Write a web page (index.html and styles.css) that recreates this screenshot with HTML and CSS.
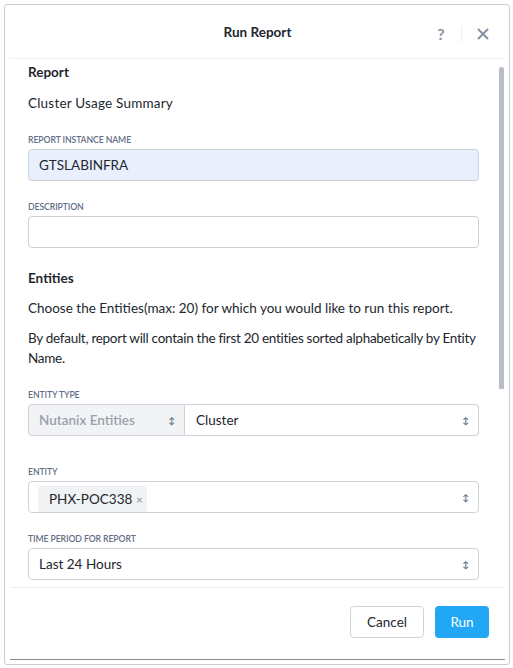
FILE: index.html
```html
<!DOCTYPE html>
<html>
<head>
<meta charset="utf-8">
<link rel="stylesheet" href="styles.css">
</head>
<body>
<div class="dialog">
  <div class="header">
    <div class="title">Run Report</div>
    <div class="actions">
      <span class="help">?</span>
      <span class="sep"></span>
      <svg class="close" width="12" height="12" viewBox="0 0 12 12"><path d="M1.5 1.5 L10.5 10.5 M10.5 1.5 L1.5 10.5" stroke="#8592a3" stroke-width="2" stroke-linecap="round"/></svg>
    </div>
  </div>
  <div class="body">
    <div class="content">
      <div class="section-title first">Report</div>
      <div class="value">Cluster Usage Summary</div>
      <div class="label l1">REPORT INSTANCE NAME</div>
      <div class="input filled">GTSLABINFRA</div>
      <div class="label l2">DESCRIPTION</div>
      <div class="input"></div>
      <div class="section-title ent">Entities</div>
      <p class="para p1">Choose the Entities(max: 20) for which you would like to run this report.</p>
      <p class="para p2">By default, report will contain the first 20 entities sorted alphabetically by Entity Name.</p>
      <div class="label l3">ENTITY TYPE</div>
      <div class="split">
        <div class="sel-left"><span>Nutanix Entities</span><span class="arrows">&#8597;</span></div>
        <div class="sel-right"><span>Cluster</span><span class="arrows">&#8597;</span></div>
      </div>
      <div class="label l4">ENTITY</div>
      <div class="input select tags"><span class="chip">PHX-POC338 <span class="x">&#215;</span></span><span class="arrows">&#8597;</span></div>
      <div class="label l2">TIME PERIOD FOR REPORT</div>
      <div class="input select"><span>Last 24 Hours</span><span class="arrows">&#8597;</span></div>
    </div>
    <div class="track"><div class="thumb"></div></div>
  </div>
  <div class="footer">
    <button class="btn cancel">Cancel</button>
    <button class="btn run">Run</button>
  </div>
  <div class="bottomline"></div>
</div>
</body>
</html>
```
FILE: styles.css
```css
* { box-sizing: border-box; }
html, body { margin: 0; padding: 0; background: #fff; }
body {
  font-family: Lato, "Open Sans", sans-serif;
  color: #22272e;
  font-size: 13.5px;
}
.dialog {
  margin: 4px;
  width: 506px;
  height: 661px;
  border: 1px solid #cdcdcd;
  border-radius: 3px;
  display: flex;
  flex-direction: column;
}
.header {
  height: 54px;
  margin: 0 4px 0 5px;
  border-bottom: 1px solid #eef0f2;
  display: flex;
  align-items: center;
  justify-content: center;
  position: relative;
  flex-shrink: 0;
}
.title {
  font-weight: 700;
  font-size: 13.5px;
  color: #22272e;
}
.actions {
  position: absolute;
  right: 16px;
  top: 19px;
  display: flex;
  align-items: center;
  gap: 0;
}
.help {
  font-weight: 700;
  font-size: 16px;
  color: #8592a3;
  width: 12px;
  text-align: center;
}
.sep {
  width: 1px;
  height: 16px;
  background: #eceef1;
  margin: 0 15px 0 14px;
}
.close { display: block; }
.body {
  flex: 1;
  display: flex;
  min-height: 0;
  overflow: hidden;
}
.content {
  flex: 1;
  padding: 5px 0 0 23px;
}
.track {
  width: 5px;
  margin-right: 5px;
  margin-left: 20px;
}
.thumb {
  margin-top: 8px;
  height: 322px;
  background: #b7bec9;
  border-radius: 3px 3px 0 0;
}
.section-title {
  font-weight: 700;
  font-size: 13.5px;
  line-height: 16px;
}
.section-title.ent { margin-top: 22px; }
.value {
  margin-top: 15px;
  line-height: 16px;
  letter-spacing: 0.2px;
}
.label {
  font-size: 8.7px;
  font-weight: 600;
  color: #5f6f84;
  line-height: 12px;
  letter-spacing: -0.1px;
  margin-bottom: 3px;
}
.label.l1 { margin-top: 23px; }
.label.l2 { margin-top: 20px; }
.label.l3 { margin-top: 21px; }
.label.l4 { margin-top: 30px; }
.input {
  height: 32px;
  border: 1px solid #cdd3dc;
  border-radius: 4px;
  padding: 0 10px;
  display: flex;
  align-items: center;
  background: #fff;
}
.input.filled { background: #e9effc; }
.select { justify-content: space-between; padding-right: 9px; }
.arrows {
  font-size: 9px;
  color: #6b7686;
  font-weight: 700;
}
.tags { padding-left: 9px; }
.chip {
  background: #f0f2f4;
  border-radius: 3px;
  height: 26px;
  align-self: flex-start;
  display: flex;
  align-items: center;
  padding: 0 4px 0 11px;
  margin-top: 4px;
}
.chip .x { color: #9aa4b1; font-size: 11px; margin-left: 4px; font-weight: 700; }
.para {
  margin: 0 -12px 0 0;
  line-height: 20px;
}
.para.p1 { margin-top: 12px; }
.para.p2 { margin-top: 10px; letter-spacing: -0.28px; }
.split {
  display: flex;
  height: 32px;
}
.sel-left {
  width: 157px;
  background: #f2f3f5;
  border: 1px solid #cdd3dc;
  border-radius: 4px 0 0 4px;
  color: #98a1ad;
  font-weight: 600;
  display: flex;
  align-items: center;
  justify-content: space-between;
  padding: 0 9px 0 10px;
}
.sel-right {
  flex: 1;
  border: 1px solid #cdd3dc;
  border-left: none;
  border-radius: 0 4px 4px 0;
  display: flex;
  align-items: center;
  justify-content: space-between;
  padding: 0 9px 0 11px;
}
.footer {
  height: 72px;
  margin: 0 4px 0 5px;
  border-top: 1px solid #eceef1;
  display: flex;
  justify-content: flex-end;
  align-items: flex-start;
  padding: 18px 16px 0 0;
  gap: 11px;
  flex-shrink: 0;
}
.btn {
  height: 32px;
  border-radius: 4px;
  font-family: Lato, "Open Sans", sans-serif;
  font-size: 13.5px;
  cursor: pointer;
}
.cancel {
  width: 74px;
  background: #fff;
  border: 1px solid #cdd3dc;
  color: #22272e;
}
.run {
  width: 54px;
  background: #22a7f5;
  border: none;
  color: #fff;
}
.bottomline {
  height: 1px;
  background: #8b8b8b;
  margin: 0 4px 4px 5px;
  flex-shrink: 0;
}
```
